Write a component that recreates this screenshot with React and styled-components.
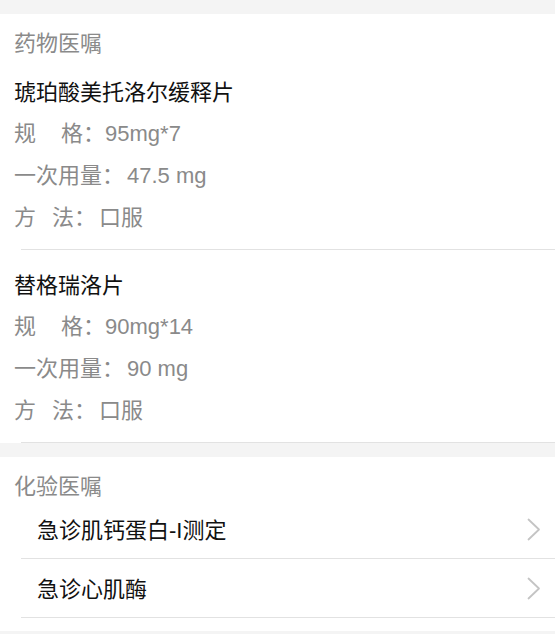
import React from "react";
import styled, { createGlobalStyle } from "styled-components";

const Global = createGlobalStyle`
  html, body {
    margin: 0;
    padding: 0;
    background: #f4f4f4;
  }
  body {
    font-family: "Liberation Sans", "Noto Sans CJK SC", sans-serif;
    -webkit-font-smoothing: antialiased;
  }
`;

const Page = styled.div`
  min-height: 100vh;
  background: #f4f4f4;
  padding-top: 14px;
  display: flex;
  flex-direction: column;
  gap: 14px;
`;

const Card = styled.section`
  background: #ffffff;
  padding-bottom: ${(p) => p.$bottom || 0}px;
`;

const SectionTitle = styled.div`
  padding: 18px 0 1px 14px;
  font-size: 22px;
  line-height: 24px;
  color: #8a8a8a;
`;

const DrugBlock = styled.div`
  padding: 16px 0 10px 14px;
  display: flex;
  flex-direction: column;
`;

const DrugName = styled.div`
  font-size: 22px;
  line-height: 40px;
  color: #111111;
`;

const InfoRow = styled.div`
  display: flex;
  align-items: center;
  font-size: 22px;
  line-height: 42px;
  color: #8a8a8a;
  white-space: nowrap;
`;

const Gap = styled.span`
  display: inline-block;
  width: ${(p) => p.$w}px;
`;

const Value = styled.span`
  margin-left: ${(p) => p.$pad || 0}px;
`;

const Divider = styled.div`
  height: 1px;
  margin-left: 21px;
  background: #e2e2e2;
`;

const LinkRow = styled.div`
  display: flex;
  align-items: center;
  justify-content: space-between;
  margin-left: 21px;
  padding: 16px 14px 12px 16px;
  border-bottom: 1px solid #e2e2e2;
`;

const LinkText = styled.span`
  font-size: 22px;
  line-height: 30px;
  color: #111111;
`;

const Chevron = styled.svg`
  width: 14px;
  height: 23px;
  margin-bottom: 4px;
  flex: none;
`;

const drugs = [
  { name: "琥珀酸美托洛尔缓释片", spec: "95mg*7", dose: "47.5 mg", method: "口服" },
  { name: "替格瑞洛片", spec: "90mg*14", dose: "90 mg", method: "口服" },
];

const labs = ["急诊肌钙蛋白-I测定", "急诊心肌酶"];

function ChevronIcon() {
  return (
    <Chevron viewBox="0 0 14 23" fill="none">
      <polyline
        points="1.5,1.5 12,11.5 1.5,21.5"
        stroke="#c4c4c4"
        strokeWidth="1.8"
        strokeLinecap="round"
        strokeLinejoin="round"
      />
    </Chevron>
  );
}

export default function App() {
  return (
    <>
      <Global />
      <Page>
        <Card>
          <SectionTitle>药物医嘱</SectionTitle>
          {drugs.map((d) => (
            <React.Fragment key={d.name}>
              <DrugBlock>
                <DrugName>{d.name}</DrugName>
                <InfoRow>
                  规<Gap $w={25} />格：<Value>{d.spec}</Value>
                </InfoRow>
                <InfoRow>
                  一次用量：<Value $pad={3}>{d.dose}</Value>
                </InfoRow>
                <InfoRow>
                  方<Gap $w={16} />法：<Value $pad={3}>{d.method}</Value>
                </InfoRow>
              </DrugBlock>
              <Divider />
            </React.Fragment>
          ))}
        </Card>
        <Card $bottom={13}>
          <SectionTitle>化验医嘱</SectionTitle>
          {labs.map((l) => (
            <LinkRow key={l}>
              <LinkText>{l}</LinkText>
              <ChevronIcon />
            </LinkRow>
          ))}
        </Card>
      </Page>
    </>
  );
}
